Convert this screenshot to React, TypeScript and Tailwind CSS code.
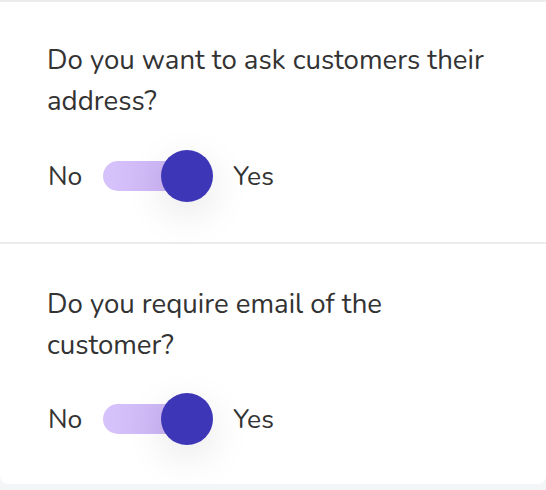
import React, { useState } from 'react';

function Toggle({ on, onChange }: { on: boolean; onChange: () => void }) {
  return (
    <div className="flex items-center pl-[1px]">
      <span className="text-[26.5px] leading-[40px] text-[#333333]">No</span>
      <button
        type="button"
        onClick={onChange}
        className="relative ml-[21px] mr-[20px] h-[52px] w-[110px]"
      >
        <span className="absolute left-0 top-[11px] h-[30px] w-[96px] rounded-full bg-gradient-to-r from-[#d7c3fc] to-[#c7aef0]" />
        <span
          className={
            on
              ? 'absolute left-[58px] top-0 h-[52px] w-[52px] rounded-full bg-[#3d37b7] shadow-[0_12px_40px_rgba(0,0,0,0.1)] transition-all'
              : 'absolute left-0 top-0 h-[52px] w-[52px] rounded-full bg-[#3d37b7] shadow-[0_12px_40px_rgba(0,0,0,0.1)] transition-all'
          }
        />
      </button>
      <span className="text-[26.5px] leading-[40px] text-[#333333]">Yes</span>
    </div>
  );
}

function Question({ label, last }: { label: string; last?: boolean }) {
  const [on, setOn] = useState(true);
  return (
    <div className={last ? 'px-[47px] pt-[40px] pb-[39px]' : 'px-[47px] pt-[38px] pb-[40px] border-b-2 border-[#ececec]'}>
      <p className="text-[27.6px] leading-[41px] text-[#333333]">{label}</p>
      <div className={last ? 'mt-[27px]' : 'mt-[28px]'}>
        <Toggle on={on} onChange={() => setOn(!on)} />
      </div>
    </div>
  );
}

export default function App() {
  return (
    <div className="min-h-screen bg-[#f4f5f7]" style={{ fontFamily: 'Nunito, Lato, "Open Sans", sans-serif' }}>
      <div className="bg-white border-t-2 border-[#ececec] rounded-b-lg">
        <Question label="Do you want to ask customers their address?" />
        <Question label="Do you require email of the customer?" last />
      </div>
    </div>
  );
}
